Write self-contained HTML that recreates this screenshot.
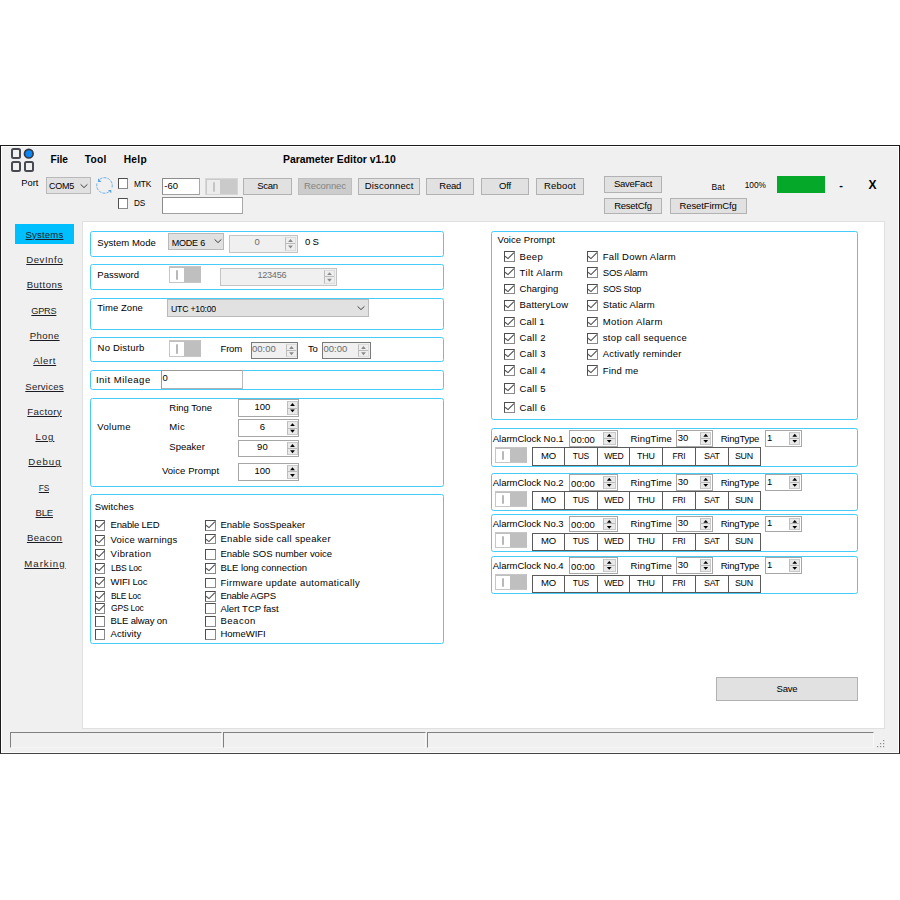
<!DOCTYPE html><html><head><meta charset="utf-8"><style>
html,body{margin:0;padding:0;background:#fff;width:900px;height:900px;overflow:hidden;position:relative}
.t{position:absolute;font-family:"Liberation Sans",sans-serif;white-space:nowrap;line-height:0;height:0}
div,svg{position:absolute}
</style></head><body>
<div style="position:absolute;left:0.0px;top:145.0px;width:900.0px;height:609.0px;box-sizing:border-box;background:#f0f0f0;border:1px solid #1a1a1a;border-bottom-color:#444"></div>
<div style="position:absolute;left:1.0px;top:146.0px;width:898.0px;height:607.0px;box-sizing:border-box;border-top:1px solid #fff;border-left:1px solid #fff;border-right:1px solid #fff;border-bottom:1px solid #fafafa"></div>
<div style="position:absolute;left:11.0px;top:148.3px;width:9.9px;height:10.4px;box-sizing:border-box;border:2px solid #464950;border-radius:2.5px"></div>
<div style="position:absolute;left:11.0px;top:161.3px;width:9.9px;height:10.4px;box-sizing:border-box;border:2px solid #464950;border-radius:2.5px"></div>
<div style="position:absolute;left:23.8px;top:161.3px;width:10.2px;height:10.4px;box-sizing:border-box;border:2px solid #464950;border-radius:2.5px"></div>
<svg style="position:absolute;left:22px;top:147px" width="14" height="14"><circle cx="6.8" cy="6.7" r="4.3" fill="#0a86f7" stroke="#353a44" stroke-width="1.7"/></svg>
<div class="t" style="left:50.4px;top:159.9px;font-size:10.2px;font-weight:700;color:#000;letter-spacing:0.013px;">File</div>
<div class="t" style="left:84.7px;top:159.9px;font-size:10.2px;font-weight:700;color:#000;letter-spacing:0.283px;">Tool</div>
<div class="t" style="left:123.7px;top:159.9px;font-size:10.2px;font-weight:700;color:#000;letter-spacing:0.307px;">Help</div>
<div class="t" style="left:283.0px;top:159.5px;font-size:10.4px;font-weight:700;color:#000;letter-spacing:0.004px;">Parameter Editor v1.10</div>
<div class="t" style="left:21.3px;top:182.9px;font-size:9.3px;font-weight:400;color:#000;letter-spacing:-0.021px;">Port</div>
<div style="position:absolute;left:46.1px;top:177.2px;width:45.2px;height:17.2px;box-sizing:border-box;background:#e1e1e1;border:1px solid #b9b9b9"></div>
<div class="t" style="left:48.9px;top:186.2px;font-size:9px;font-weight:400;color:#000;letter-spacing:-0.250px;">COM5</div>
<svg style="position:absolute;left:79.2px;top:182.8px" width="10" height="6"><path d="M1.6 1.4 L5 4.6 L8.4 1.4" fill="none" stroke="#404040" stroke-width="1"/></svg>
<svg style="position:absolute;left:92px;top:174px" width="24" height="23"><g fill="none" stroke="#72b3ea" stroke-width="1" stroke-dasharray="3 1"><path d="M20.03 13.42 A7.8 7.8 0 0 0 7.6 5.4"/><path d="M4.97 9.38 A7.8 7.8 0 0 0 17.6 17.3"/></g><path d="M6 4.2 L6 7.9 L9.4 7.9 Z" fill="#5aa3e4"/><path d="M16 16 L19.3 16 L19.3 19.3 Z" fill="#5aa3e4"/></svg>
<div style="position:absolute;left:117.6px;top:178.3px;width:10.5px;height:10.5px;box-sizing:border-box;border:1.1px solid;border-color:#4e4e4e #8a8a8a #8a8a8a #4e4e4e;background:#fff"></div>
<div class="t" style="left:133.7px;top:183.9px;font-size:9.3px;font-weight:400;color:#000;letter-spacing:-0.250px;transform-origin:0 0;transform:scaleX(0.9046);">MTK</div>
<div style="position:absolute;left:117.6px;top:198.3px;width:10.5px;height:10.5px;box-sizing:border-box;border:1.1px solid;border-color:#4e4e4e #8a8a8a #8a8a8a #4e4e4e;background:#fff"></div>
<div class="t" style="left:133.7px;top:203.2px;font-size:9.3px;font-weight:400;color:#000;letter-spacing:-0.250px;transform-origin:0 0;transform:scaleX(0.8760);">DS</div>
<div style="position:absolute;left:162.0px;top:177.7px;width:37.7px;height:17.8px;box-sizing:border-box;background:#fff;border:1.2px solid #8c8c8c;border-right-color:#a8a8a8;border-bottom-color:#a0a0a0"></div>
<div class="t" style="left:164.3px;top:185.9px;font-size:9.5px;font-weight:400;color:#000;letter-spacing:0.000px;">-60</div>
<div style="position:absolute;left:162.0px;top:197.3px;width:81.0px;height:17.2px;box-sizing:border-box;background:#fff;border:1.2px solid #8c8c8c;border-right-color:#a8a8a8;border-bottom-color:#a0a0a0"></div>
<div style="position:absolute;left:205.0px;top:178.0px;width:32.7px;height:16.7px;box-sizing:border-box;background:#cacaca;border:1.5px solid #d6d6d6"></div>
<div style="position:absolute;left:206.5px;top:179.5px;width:13.9px;height:14.2px;box-sizing:border-box;background:#ececec"></div>
<div style="position:absolute;left:212.5px;top:181.8px;width:2.0px;height:9.8px;box-sizing:border-box;background:#c4c4c4;border-radius:1px"></div>
<div style="position:absolute;left:243.4px;top:177.8px;width:48.3px;height:17.2px;box-sizing:border-box;background:#e1e1e1;border:1px solid #b2b2b2"></div>
<div class="t" style="left:167.6px;width:200px;text-align:center;top:186.4px;font-size:9.5px;font-weight:400;color:#000;letter-spacing:-0.250px;text-indent:-0.250px;">Scan</div>
<div style="position:absolute;left:298.3px;top:177.8px;width:53.4px;height:17.2px;box-sizing:border-box;background:#cccccc;border:1px solid #bfbfbf"></div>
<div class="t" style="left:225.0px;width:200px;text-align:center;top:186.4px;font-size:9.5px;font-weight:400;color:#838383;letter-spacing:-0.112px;text-indent:-0.112px;">Reconnec</div>
<div style="position:absolute;left:358.3px;top:177.8px;width:61.6px;height:17.2px;box-sizing:border-box;background:#e1e1e1;border:1px solid #b2b2b2"></div>
<div class="t" style="left:289.1px;width:200px;text-align:center;top:186.4px;font-size:9.5px;font-weight:400;color:#000;letter-spacing:0.189px;text-indent:0.189px;">Disconnect</div>
<div style="position:absolute;left:426.2px;top:177.8px;width:48.2px;height:17.2px;box-sizing:border-box;background:#e1e1e1;border:1px solid #b2b2b2"></div>
<div class="t" style="left:350.3px;width:200px;text-align:center;top:186.4px;font-size:9.5px;font-weight:400;color:#000;letter-spacing:-0.173px;text-indent:-0.173px;">Read</div>
<div style="position:absolute;left:481.1px;top:177.8px;width:47.8px;height:17.2px;box-sizing:border-box;background:#e1e1e1;border:1px solid #b2b2b2"></div>
<div class="t" style="left:405.0px;width:200px;text-align:center;top:186.4px;font-size:9.5px;font-weight:400;color:#000;letter-spacing:-0.150px;text-indent:-0.150px;">Off</div>
<div style="position:absolute;left:535.6px;top:177.8px;width:48.4px;height:17.2px;box-sizing:border-box;background:#e1e1e1;border:1px solid #b2b2b2"></div>
<div class="t" style="left:459.8px;width:200px;text-align:center;top:186.4px;font-size:9.5px;font-weight:400;color:#000;letter-spacing:0.232px;text-indent:0.232px;">Reboot</div>
<div style="position:absolute;left:604.2px;top:176.0px;width:57.8px;height:16.6px;box-sizing:border-box;background:#e1e1e1;border:1px solid #b2b2b2"></div>
<div class="t" style="left:533.1px;width:200px;text-align:center;top:184.3px;font-size:9.5px;font-weight:400;color:#000;letter-spacing:-0.250px;text-indent:-0.250px;">SaveFact</div>
<div style="position:absolute;left:604.2px;top:197.9px;width:57.8px;height:16.5px;box-sizing:border-box;background:#e1e1e1;border:1px solid #b2b2b2"></div>
<div class="t" style="left:533.1px;width:200px;text-align:center;top:206.1px;font-size:9.5px;font-weight:400;color:#000;letter-spacing:-0.250px;text-indent:-0.250px;">ResetCfg</div>
<div style="position:absolute;left:670.0px;top:197.9px;width:76.5px;height:16.5px;box-sizing:border-box;background:#e1e1e1;border:1px solid #b2b2b2"></div>
<div class="t" style="left:608.2px;width:200px;text-align:center;top:206.1px;font-size:9.5px;font-weight:400;color:#000;letter-spacing:-0.109px;text-indent:-0.109px;">ResetFirmCfg</div>
<div class="t" style="left:711.4px;top:187.0px;font-size:8.5px;font-weight:400;color:#000;letter-spacing:0.267px;">Bat</div>
<div class="t" style="left:744.7px;top:185.0px;font-size:8.3px;font-weight:400;color:#000;letter-spacing:-0.011px;">100%</div>
<div style="position:absolute;left:776.8px;top:176.0px;width:48.2px;height:17.3px;box-sizing:border-box;background:#06a82a"></div>
<div class="t" style="left:741.0px;width:200px;text-align:center;top:185.1px;font-size:11px;font-weight:700;color:#000;letter-spacing:0.000px;text-indent:0.000px;">-</div>
<div class="t" style="left:772.6px;width:200px;text-align:center;top:184.9px;font-size:12px;font-weight:700;color:#000;letter-spacing:0.000px;text-indent:0.000px;">X</div>
<div style="position:absolute;left:15.3px;top:224.2px;width:58.9px;height:20.2px;box-sizing:border-box;background:#00bfff"></div>
<div class="t" style="left:-55.6px;width:200px;text-align:center;top:234.7px;font-size:9.6px;font-weight:400;color:#1c1c24;letter-spacing:0.159px;text-indent:0.159px;text-decoration:underline;text-decoration-thickness:1px;text-underline-offset:1.2px">Systems</div>
<div class="t" style="left:-55.6px;width:200px;text-align:center;top:260.0px;font-size:9.6px;font-weight:400;color:#1c1c24;letter-spacing:0.529px;text-indent:0.529px;text-decoration:underline;text-decoration-thickness:1px;text-underline-offset:1.2px">DevInfo</div>
<div class="t" style="left:-55.6px;width:200px;text-align:center;top:285.3px;font-size:9.6px;font-weight:400;color:#1c1c24;letter-spacing:0.492px;text-indent:0.492px;text-decoration:underline;text-decoration-thickness:1px;text-underline-offset:1.2px">Buttons</div>
<div class="t" style="left:-55.6px;width:200px;text-align:center;top:310.6px;font-size:9.6px;font-weight:400;color:#1c1c24;letter-spacing:-0.250px;text-indent:-0.250px;transform-origin:50% 0;transform:scaleX(0.9545);text-decoration:underline;text-decoration-thickness:1px;text-underline-offset:1.2px">GPRS</div>
<div class="t" style="left:-55.6px;width:200px;text-align:center;top:335.9px;font-size:9.6px;font-weight:400;color:#1c1c24;letter-spacing:0.438px;text-indent:0.438px;text-decoration:underline;text-decoration-thickness:1px;text-underline-offset:1.2px">Phone</div>
<div class="t" style="left:-55.6px;width:200px;text-align:center;top:361.2px;font-size:9.6px;font-weight:400;color:#1c1c24;letter-spacing:0.629px;text-indent:0.629px;text-decoration:underline;text-decoration-thickness:1px;text-underline-offset:1.2px">Alert</div>
<div class="t" style="left:-55.6px;width:200px;text-align:center;top:386.5px;font-size:9.6px;font-weight:400;color:#1c1c24;letter-spacing:0.208px;text-indent:0.208px;text-decoration:underline;text-decoration-thickness:1px;text-underline-offset:1.2px">Services</div>
<div class="t" style="left:-55.6px;width:200px;text-align:center;top:411.8px;font-size:9.6px;font-weight:400;color:#1c1c24;letter-spacing:0.375px;text-indent:0.375px;text-decoration:underline;text-decoration-thickness:1px;text-underline-offset:1.2px">Factory</div>
<div class="t" style="left:-55.6px;width:200px;text-align:center;top:437.1px;font-size:9.6px;font-weight:400;color:#1c1c24;letter-spacing:0.992px;text-indent:0.992px;text-decoration:underline;text-decoration-thickness:1px;text-underline-offset:1.2px">Log</div>
<div class="t" style="left:-55.6px;width:200px;text-align:center;top:462.4px;font-size:9.6px;font-weight:400;color:#1c1c24;letter-spacing:0.992px;text-indent:0.992px;text-decoration:underline;text-decoration-thickness:1px;text-underline-offset:1.2px">Debug</div>
<div class="t" style="left:-55.6px;width:200px;text-align:center;top:487.7px;font-size:9.6px;font-weight:400;color:#1c1c24;letter-spacing:-0.250px;text-indent:-0.250px;transform-origin:50% 0;transform:scaleX(0.8739);text-decoration:underline;text-decoration-thickness:1px;text-underline-offset:1.2px">FS</div>
<div class="t" style="left:-55.6px;width:200px;text-align:center;top:513.0px;font-size:9.6px;font-weight:400;color:#1c1c24;letter-spacing:-0.250px;text-indent:-0.250px;text-decoration:underline;text-decoration-thickness:1px;text-underline-offset:1.2px">BLE</div>
<div class="t" style="left:-55.6px;width:200px;text-align:center;top:538.3px;font-size:9.6px;font-weight:400;color:#1c1c24;letter-spacing:0.491px;text-indent:0.491px;text-decoration:underline;text-decoration-thickness:1px;text-underline-offset:1.2px">Beacon</div>
<div class="t" style="left:-55.6px;width:200px;text-align:center;top:563.6px;font-size:9.6px;font-weight:400;color:#1c1c24;letter-spacing:1.021px;text-indent:1.021px;text-decoration:underline;text-decoration-thickness:1px;text-underline-offset:1.2px">Marking</div>
<div style="position:absolute;left:82.0px;top:221.0px;width:802.5px;height:508.0px;box-sizing:border-box;background:#fff;border:1px solid #e0e0e0"></div>
<div style="position:absolute;left:90.4px;top:230.7px;width:353.6px;height:26.3px;box-sizing:border-box;border:1.4px solid #45cdfa;border-radius:2.5px"></div>
<div class="t" style="left:97.3px;top:242.5px;font-size:9.5px;font-weight:400;color:#000;letter-spacing:0.042px;">System Mode</div>
<div style="position:absolute;left:168.0px;top:232.7px;width:56.3px;height:17.1px;box-sizing:border-box;background:#e1e1e1;border:1px solid #b9b9b9"></div>
<div class="t" style="left:171.7px;top:242.5px;font-size:9px;font-weight:400;color:#000;letter-spacing:-0.203px;">MODE 6</div>
<svg style="position:absolute;left:212.5px;top:238.2px" width="10" height="6"><path d="M1.6 1.4 L5 4.6 L8.4 1.4" fill="none" stroke="#404040" stroke-width="1"/></svg>
<div style="position:absolute;left:229.4px;top:235.2px;width:68.5px;height:17.5px;box-sizing:border-box;background:#f0f0f0;border:1px solid #c4c4c4"></div>
<div style="position:absolute;left:284.9px;top:237.2px;width:11.0px;height:13.5px;box-sizing:border-box;background:#eeeeee;border:1px solid #dcdcdc;border-left-color:#bdbdbd"></div>
<div style="position:absolute;left:285.9px;top:243.4px;width:9.0px;height:1.0px;box-sizing:border-box;background:#bababa"></div>
<svg style="position:absolute;left:284.9px;top:237.2px" width="11.0" height="13.5"><path d="M3.10 4.97 L7.90 4.97 L5.50 2.08 Z" fill="#8a8a8a"/><path d="M3.10 8.53 L7.90 8.53 L5.50 11.43 Z" fill="#8a8a8a"/></svg>
<div class="t" style="left:157.1px;width:200px;text-align:center;top:241.9px;font-size:9.5px;font-weight:400;color:#6d6d6d;letter-spacing:0.000px;text-indent:0.000px;">0</div>
<div class="t" style="left:305.1px;top:241.9px;font-size:9.5px;font-weight:400;color:#000;letter-spacing:-0.250px;">0 S</div>
<div style="position:absolute;left:90.4px;top:264.4px;width:353.6px;height:25.8px;box-sizing:border-box;border:1.4px solid #45cdfa;border-radius:2.5px"></div>
<div class="t" style="left:97.3px;top:275.2px;font-size:9.5px;font-weight:400;color:#000;letter-spacing:-0.003px;">Password</div>
<div style="position:absolute;left:168.5px;top:265.7px;width:32.0px;height:17.3px;box-sizing:border-box;background:#bfbfbf;border:1.5px solid #c6c6c6;border-right-color:#bfbfbf;border-bottom-width:1px"></div>
<div style="position:absolute;left:170.0px;top:267.5px;width:13.5px;height:14.7px;box-sizing:border-box;background:#fff"></div>
<div style="position:absolute;left:175.9px;top:269.5px;width:2.0px;height:10.4px;box-sizing:border-box;background:#b8b8b8;border-radius:1px"></div>
<div style="position:absolute;left:220.0px;top:267.7px;width:117.0px;height:17.9px;box-sizing:border-box;background:#f0f0f0;border:1px solid #c4c4c4"></div>
<div style="position:absolute;left:324.0px;top:269.7px;width:11.0px;height:13.9px;box-sizing:border-box;background:#eeeeee;border:1px solid #dcdcdc;border-left-color:#bdbdbd"></div>
<div style="position:absolute;left:325.0px;top:276.1px;width:9.0px;height:1.0px;box-sizing:border-box;background:#bababa"></div>
<svg style="position:absolute;left:324.0px;top:269.7px" width="11.0" height="13.9"><path d="M3.10 5.07 L7.90 5.07 L5.50 2.17 Z" fill="#8a8a8a"/><path d="M3.10 8.83 L7.90 8.83 L5.50 11.73 Z" fill="#8a8a8a"/></svg>
<div class="t" style="left:172.0px;width:200px;text-align:center;top:275.4px;font-size:9.5px;font-weight:400;color:#6d6d6d;letter-spacing:-0.250px;text-indent:-0.250px;transform-origin:50% 0;transform:scaleX(0.9589);">123456</div>
<div style="position:absolute;left:90.4px;top:298.2px;width:353.6px;height:31.8px;box-sizing:border-box;border:1.4px solid #45cdfa;border-radius:2.5px"></div>
<div class="t" style="left:97.3px;top:308.2px;font-size:9.5px;font-weight:400;color:#000;letter-spacing:0.055px;">Time Zone</div>
<div style="position:absolute;left:167.0px;top:299.0px;width:201.7px;height:18.0px;box-sizing:border-box;background:#e1e1e1;border:1px solid #b9b9b9"></div>
<div class="t" style="left:170.5px;top:308.9px;font-size:9.5px;font-weight:400;color:#000;letter-spacing:-0.250px;transform-origin:0 0;transform:scaleX(0.9178);">UTC +10:00</div>
<svg style="position:absolute;left:356.3px;top:305.0px" width="10" height="6"><path d="M1.6 1.4 L5 4.6 L8.4 1.4" fill="none" stroke="#404040" stroke-width="1"/></svg>
<div style="position:absolute;left:90.4px;top:337.3px;width:353.6px;height:25.0px;box-sizing:border-box;border:1.4px solid #45cdfa;border-radius:2.5px"></div>
<div class="t" style="left:97.6px;top:348.0px;font-size:9.5px;font-weight:400;color:#000;letter-spacing:0.203px;">No Disturb</div>
<div style="position:absolute;left:168.5px;top:340.3px;width:32.0px;height:16.7px;box-sizing:border-box;background:#bfbfbf;border:1.5px solid #c6c6c6;border-right-color:#bfbfbf;border-bottom-width:1px"></div>
<div style="position:absolute;left:170.0px;top:342.1px;width:13.5px;height:14.1px;box-sizing:border-box;background:#fff"></div>
<div style="position:absolute;left:175.9px;top:344.1px;width:2.0px;height:9.8px;box-sizing:border-box;background:#b8b8b8;border-radius:1px"></div>
<div class="t" style="left:220.6px;top:348.7px;font-size:9.5px;font-weight:400;color:#000;letter-spacing:-0.224px;">From</div>
<div style="position:absolute;left:250.7px;top:341.5px;width:47.8px;height:17.1px;box-sizing:border-box;background:#f0f0f0;border:1px solid #7a7a7a"></div>
<div style="position:absolute;left:285.5px;top:343.5px;width:11.0px;height:13.1px;box-sizing:border-box;background:#eeeeee;border:1px solid #dcdcdc;border-left-color:#bdbdbd"></div>
<div style="position:absolute;left:286.5px;top:349.6px;width:9.0px;height:1.0px;box-sizing:border-box;background:#bababa"></div>
<svg style="position:absolute;left:285.5px;top:343.5px" width="11.0" height="13.1"><path d="M3.10 4.88 L7.90 4.88 L5.50 1.98 Z" fill="#8a8a8a"/><path d="M3.10 8.23 L7.90 8.23 L5.50 11.13 Z" fill="#8a8a8a"/></svg>
<div class="t" style="left:252.0px;top:349.2px;font-size:9.5px;font-weight:400;color:#6d6d6d;letter-spacing:0.000px;">00:00</div>
<div class="t" style="left:308.0px;top:349.2px;font-size:9.5px;font-weight:400;color:#000;letter-spacing:-0.250px;">To</div>
<div style="position:absolute;left:322.2px;top:341.5px;width:48.6px;height:17.1px;box-sizing:border-box;background:#f0f0f0;border:1px solid #7a7a7a"></div>
<div style="position:absolute;left:357.8px;top:343.5px;width:11.0px;height:13.1px;box-sizing:border-box;background:#eeeeee;border:1px solid #dcdcdc;border-left-color:#bdbdbd"></div>
<div style="position:absolute;left:358.8px;top:349.6px;width:9.0px;height:1.0px;box-sizing:border-box;background:#bababa"></div>
<svg style="position:absolute;left:357.8px;top:343.5px" width="11.0" height="13.1"><path d="M3.10 4.88 L7.90 4.88 L5.50 1.98 Z" fill="#8a8a8a"/><path d="M3.10 8.23 L7.90 8.23 L5.50 11.13 Z" fill="#8a8a8a"/></svg>
<div class="t" style="left:323.5px;top:349.2px;font-size:9.5px;font-weight:400;color:#6d6d6d;letter-spacing:0.000px;">00:00</div>
<div style="position:absolute;left:90.4px;top:370.3px;width:353.6px;height:20.1px;box-sizing:border-box;border:1.4px solid #45cdfa;border-radius:2.5px"></div>
<div class="t" style="left:95.9px;top:379.8px;font-size:9.5px;font-weight:400;color:#000;letter-spacing:0.519px;">Init Mileage</div>
<div style="position:absolute;left:161.2px;top:370.3px;width:81.4px;height:18.3px;box-sizing:border-box;background:#fff;border:1px solid #9a9a9a;border-right-color:#b8b8b8;border-bottom-color:#b0b0b0"></div>
<div class="t" style="left:162.6px;top:378.2px;font-size:9.5px;font-weight:400;color:#000;letter-spacing:0.000px;">0</div>
<div style="position:absolute;left:90.4px;top:397.5px;width:353.6px;height:89.5px;box-sizing:border-box;border:1.4px solid #45cdfa;border-radius:2.5px"></div>
<div class="t" style="left:97.3px;top:427.2px;font-size:9.5px;font-weight:400;color:#000;letter-spacing:0.322px;">Volume</div>
<div class="t" style="left:169.3px;top:408.0px;font-size:9.5px;font-weight:400;color:#000;letter-spacing:0.011px;">Ring Tone</div>
<div class="t" style="left:169.3px;top:427.2px;font-size:9.5px;font-weight:400;color:#000;letter-spacing:0.359px;">Mic</div>
<div class="t" style="left:169.3px;top:447.2px;font-size:9.5px;font-weight:400;color:#000;letter-spacing:0.018px;">Speaker</div>
<div class="t" style="left:161.9px;top:471.2px;font-size:9.5px;font-weight:400;color:#000;letter-spacing:0.064px;">Voice Prompt</div>
<div style="position:absolute;left:238.3px;top:399.3px;width:61.2px;height:17.3px;box-sizing:border-box;background:#fff;border:1px solid #a6a6a6"></div>
<div style="position:absolute;left:286.5px;top:401.3px;width:11.0px;height:13.3px;box-sizing:border-box;background:#e9e9e9;border:1px solid #c9c9c9;border-left-color:#bdbdbd"></div>
<div style="position:absolute;left:287.5px;top:407.5px;width:9.0px;height:1.0px;box-sizing:border-box;background:#bababa"></div>
<svg style="position:absolute;left:286.5px;top:401.3px" width="11.0" height="13.3"><path d="M3.10 4.93 L7.90 4.93 L5.50 2.03 Z" fill="#000"/><path d="M3.10 8.38 L7.90 8.38 L5.50 11.28 Z" fill="#000"/></svg>
<div class="t" style="left:162.4px;width:200px;text-align:center;top:407.0px;font-size:9.5px;font-weight:400;color:#000;letter-spacing:0.000px;text-indent:0.000px;">100</div>
<div style="position:absolute;left:238.3px;top:419.3px;width:61.2px;height:17.9px;box-sizing:border-box;background:#fff;border:1px solid #a6a6a6"></div>
<div style="position:absolute;left:286.5px;top:421.3px;width:11.0px;height:13.9px;box-sizing:border-box;background:#e9e9e9;border:1px solid #c9c9c9;border-left-color:#bdbdbd"></div>
<div style="position:absolute;left:287.5px;top:427.8px;width:9.0px;height:1.0px;box-sizing:border-box;background:#bababa"></div>
<svg style="position:absolute;left:286.5px;top:421.3px" width="11.0" height="13.9"><path d="M3.10 5.07 L7.90 5.07 L5.50 2.17 Z" fill="#000"/><path d="M3.10 8.82 L7.90 8.82 L5.50 11.72 Z" fill="#000"/></svg>
<div class="t" style="left:162.4px;width:200px;text-align:center;top:427.2px;font-size:9.5px;font-weight:400;color:#000;letter-spacing:0.000px;text-indent:0.000px;">6</div>
<div style="position:absolute;left:238.3px;top:439.9px;width:61.2px;height:17.3px;box-sizing:border-box;background:#fff;border:1px solid #a6a6a6"></div>
<div style="position:absolute;left:286.5px;top:441.9px;width:11.0px;height:13.3px;box-sizing:border-box;background:#e9e9e9;border:1px solid #c9c9c9;border-left-color:#bdbdbd"></div>
<div style="position:absolute;left:287.5px;top:448.0px;width:9.0px;height:1.0px;box-sizing:border-box;background:#bababa"></div>
<svg style="position:absolute;left:286.5px;top:441.9px" width="11.0" height="13.3"><path d="M3.10 4.92 L7.90 4.92 L5.50 2.02 Z" fill="#000"/><path d="M3.10 8.37 L7.90 8.37 L5.50 11.27 Z" fill="#000"/></svg>
<div class="t" style="left:162.4px;width:200px;text-align:center;top:447.2px;font-size:9.5px;font-weight:400;color:#000;letter-spacing:0.000px;text-indent:0.000px;">90</div>
<div style="position:absolute;left:238.3px;top:462.5px;width:61.2px;height:18.2px;box-sizing:border-box;background:#fff;border:1px solid #a6a6a6"></div>
<div style="position:absolute;left:286.5px;top:464.5px;width:11.0px;height:14.2px;box-sizing:border-box;background:#e9e9e9;border:1px solid #c9c9c9;border-left-color:#bdbdbd"></div>
<div style="position:absolute;left:287.5px;top:471.1px;width:9.0px;height:1.0px;box-sizing:border-box;background:#bababa"></div>
<svg style="position:absolute;left:286.5px;top:464.5px" width="11.0" height="14.2"><path d="M3.10 5.15 L7.90 5.15 L5.50 2.25 Z" fill="#000"/><path d="M3.10 9.05 L7.90 9.05 L5.50 11.95 Z" fill="#000"/></svg>
<div class="t" style="left:162.4px;width:200px;text-align:center;top:471.2px;font-size:9.5px;font-weight:400;color:#000;letter-spacing:0.000px;text-indent:0.000px;">100</div>
<div style="position:absolute;left:90.4px;top:494.0px;width:353.6px;height:149.5px;box-sizing:border-box;border:1.4px solid #45cdfa;border-radius:2.5px"></div>
<div class="t" style="left:94.7px;top:507.2px;font-size:9.5px;font-weight:400;color:#000;letter-spacing:0.155px;">Switches</div>
<div style="position:absolute;left:94.7px;top:520.0px;width:10.5px;height:10.5px;box-sizing:border-box;border:1.1px solid;border-color:#4e4e4e #8a8a8a #8a8a8a #4e4e4e;background:#fff"><svg width="11" height="11" style="position:absolute;left:-1px;top:-1px"><path d="M1 5.2 L4 7.6 L9.9 1.7" fill="none" stroke="#505050" stroke-width="1.1"/></svg></div>
<div class="t" style="left:110.6px;top:524.8px;font-size:9.5px;font-weight:400;color:#000;letter-spacing:-0.200px;">Enable LED</div>
<div style="position:absolute;left:94.7px;top:535.3px;width:10.5px;height:10.5px;box-sizing:border-box;border:1.1px solid;border-color:#4e4e4e #8a8a8a #8a8a8a #4e4e4e;background:#fff"><svg width="11" height="11" style="position:absolute;left:-1px;top:-1px"><path d="M1 5.2 L4 7.6 L9.9 1.7" fill="none" stroke="#505050" stroke-width="1.1"/></svg></div>
<div class="t" style="left:110.6px;top:540.3px;font-size:9.5px;font-weight:400;color:#000;letter-spacing:0.215px;">Voice warnings</div>
<div style="position:absolute;left:94.7px;top:549.4px;width:10.5px;height:10.5px;box-sizing:border-box;border:1.1px solid;border-color:#4e4e4e #8a8a8a #8a8a8a #4e4e4e;background:#fff"><svg width="11" height="11" style="position:absolute;left:-1px;top:-1px"><path d="M1 5.2 L4 7.6 L9.9 1.7" fill="none" stroke="#505050" stroke-width="1.1"/></svg></div>
<div class="t" style="left:110.6px;top:554.1px;font-size:9.5px;font-weight:400;color:#000;letter-spacing:0.384px;">Vibration</div>
<div style="position:absolute;left:94.7px;top:563.3px;width:10.5px;height:10.5px;box-sizing:border-box;border:1.1px solid;border-color:#4e4e4e #8a8a8a #8a8a8a #4e4e4e;background:#fff"><svg width="11" height="11" style="position:absolute;left:-1px;top:-1px"><path d="M1 5.2 L4 7.6 L9.9 1.7" fill="none" stroke="#505050" stroke-width="1.1"/></svg></div>
<div class="t" style="left:110.6px;top:568.1px;font-size:9.5px;font-weight:400;color:#000;letter-spacing:-0.250px;transform-origin:0 0;transform:scaleX(0.9035);">LBS Loc</div>
<div style="position:absolute;left:94.7px;top:577.2px;width:10.5px;height:10.5px;box-sizing:border-box;border:1.1px solid;border-color:#4e4e4e #8a8a8a #8a8a8a #4e4e4e;background:#fff"><svg width="11" height="11" style="position:absolute;left:-1px;top:-1px"><path d="M1 5.2 L4 7.6 L9.9 1.7" fill="none" stroke="#505050" stroke-width="1.1"/></svg></div>
<div class="t" style="left:110.6px;top:582.0px;font-size:9.5px;font-weight:400;color:#000;letter-spacing:-0.159px;">WIFI Loc</div>
<div style="position:absolute;left:94.7px;top:591.1px;width:10.5px;height:10.5px;box-sizing:border-box;border:1.1px solid;border-color:#4e4e4e #8a8a8a #8a8a8a #4e4e4e;background:#fff"><svg width="11" height="11" style="position:absolute;left:-1px;top:-1px"><path d="M1 5.2 L4 7.6 L9.9 1.7" fill="none" stroke="#505050" stroke-width="1.1"/></svg></div>
<div class="t" style="left:110.6px;top:595.9px;font-size:9.5px;font-weight:400;color:#000;letter-spacing:-0.250px;transform-origin:0 0;transform:scaleX(0.8773);">BLE Loc</div>
<div style="position:absolute;left:94.7px;top:603.1px;width:10.5px;height:10.5px;box-sizing:border-box;border:1.1px solid;border-color:#4e4e4e #8a8a8a #8a8a8a #4e4e4e;background:#fff"><svg width="11" height="11" style="position:absolute;left:-1px;top:-1px"><path d="M1 5.2 L4 7.6 L9.9 1.7" fill="none" stroke="#505050" stroke-width="1.1"/></svg></div>
<div class="t" style="left:110.6px;top:608.1px;font-size:9.5px;font-weight:400;color:#000;letter-spacing:-0.250px;transform-origin:0 0;transform:scaleX(0.9006);">GPS Loc</div>
<div style="position:absolute;left:94.7px;top:616.1px;width:10.5px;height:10.5px;box-sizing:border-box;border:1.1px solid;border-color:#4e4e4e #8a8a8a #8a8a8a #4e4e4e;background:#fff"></div>
<div class="t" style="left:110.6px;top:621.1px;font-size:9.5px;font-weight:400;color:#000;letter-spacing:-0.127px;">BLE alway on</div>
<div style="position:absolute;left:94.7px;top:629.1px;width:10.5px;height:10.5px;box-sizing:border-box;border:1.1px solid;border-color:#4e4e4e #8a8a8a #8a8a8a #4e4e4e;background:#fff"></div>
<div class="t" style="left:110.6px;top:634.4px;font-size:9.5px;font-weight:400;color:#000;letter-spacing:0.087px;">Activity</div>
<div style="position:absolute;left:205.0px;top:520.2px;width:10.5px;height:10.5px;box-sizing:border-box;border:1.1px solid;border-color:#4e4e4e #8a8a8a #8a8a8a #4e4e4e;background:#fff"><svg width="11" height="11" style="position:absolute;left:-1px;top:-1px"><path d="M1 5.2 L4 7.6 L9.9 1.7" fill="none" stroke="#505050" stroke-width="1.1"/></svg></div>
<div class="t" style="left:220.4px;top:525.0px;font-size:9.5px;font-weight:400;color:#000;letter-spacing:0.057px;">Enable SosSpeaker</div>
<div style="position:absolute;left:205.0px;top:533.9px;width:10.5px;height:10.5px;box-sizing:border-box;border:1.1px solid;border-color:#4e4e4e #8a8a8a #8a8a8a #4e4e4e;background:#fff"><svg width="11" height="11" style="position:absolute;left:-1px;top:-1px"><path d="M1 5.2 L4 7.6 L9.9 1.7" fill="none" stroke="#505050" stroke-width="1.1"/></svg></div>
<div class="t" style="left:220.4px;top:538.9px;font-size:9.5px;font-weight:400;color:#000;letter-spacing:0.314px;">Enable side call speaker</div>
<div style="position:absolute;left:205.0px;top:549.4px;width:10.5px;height:10.5px;box-sizing:border-box;border:1.1px solid;border-color:#4e4e4e #8a8a8a #8a8a8a #4e4e4e;background:#fff"></div>
<div class="t" style="left:220.4px;top:553.9px;font-size:9.5px;font-weight:400;color:#000;letter-spacing:-0.016px;">Enable SOS number voice</div>
<div style="position:absolute;left:205.0px;top:563.3px;width:10.5px;height:10.5px;box-sizing:border-box;border:1.1px solid;border-color:#4e4e4e #8a8a8a #8a8a8a #4e4e4e;background:#fff"><svg width="11" height="11" style="position:absolute;left:-1px;top:-1px"><path d="M1 5.2 L4 7.6 L9.9 1.7" fill="none" stroke="#505050" stroke-width="1.1"/></svg></div>
<div class="t" style="left:220.4px;top:568.1px;font-size:9.5px;font-weight:400;color:#000;letter-spacing:-0.025px;">BLE long connection</div>
<div style="position:absolute;left:205.0px;top:577.5px;width:10.5px;height:10.5px;box-sizing:border-box;border:1.1px solid;border-color:#4e4e4e #8a8a8a #8a8a8a #4e4e4e;background:#fff"></div>
<div class="t" style="left:220.4px;top:582.5px;font-size:9.5px;font-weight:400;color:#000;letter-spacing:0.355px;">Firmware update automatically</div>
<div style="position:absolute;left:205.0px;top:591.4px;width:10.5px;height:10.5px;box-sizing:border-box;border:1.1px solid;border-color:#4e4e4e #8a8a8a #8a8a8a #4e4e4e;background:#fff"><svg width="11" height="11" style="position:absolute;left:-1px;top:-1px"><path d="M1 5.2 L4 7.6 L9.9 1.7" fill="none" stroke="#505050" stroke-width="1.1"/></svg></div>
<div class="t" style="left:220.4px;top:596.1px;font-size:9.5px;font-weight:400;color:#000;letter-spacing:-0.250px;">Enable AGPS</div>
<div style="position:absolute;left:205.0px;top:603.3px;width:10.5px;height:10.5px;box-sizing:border-box;border:1.1px solid;border-color:#4e4e4e #8a8a8a #8a8a8a #4e4e4e;background:#fff"></div>
<div class="t" style="left:220.4px;top:608.6px;font-size:9.5px;font-weight:400;color:#000;letter-spacing:-0.045px;">Alert TCP fast</div>
<div style="position:absolute;left:205.0px;top:616.4px;width:10.5px;height:10.5px;box-sizing:border-box;border:1.1px solid;border-color:#4e4e4e #8a8a8a #8a8a8a #4e4e4e;background:#fff"></div>
<div class="t" style="left:220.4px;top:621.4px;font-size:9.5px;font-weight:400;color:#000;letter-spacing:0.553px;">Beacon</div>
<div style="position:absolute;left:205.0px;top:629.4px;width:10.5px;height:10.5px;box-sizing:border-box;border:1.1px solid;border-color:#4e4e4e #8a8a8a #8a8a8a #4e4e4e;background:#fff"></div>
<div class="t" style="left:220.4px;top:634.4px;font-size:9.5px;font-weight:400;color:#000;letter-spacing:-0.013px;">HomeWIFI</div>
<div style="position:absolute;left:491.4px;top:231.1px;width:366.8px;height:188.5px;box-sizing:border-box;border:1.4px solid #45cdfa;border-radius:2.5px"></div>
<div class="t" style="left:497.6px;top:240.0px;font-size:9.5px;font-weight:400;color:#000;letter-spacing:0.064px;">Voice Prompt</div>
<div style="position:absolute;left:504.0px;top:251.1px;width:10.5px;height:10.5px;box-sizing:border-box;border:1.1px solid;border-color:#4e4e4e #8a8a8a #8a8a8a #4e4e4e;background:#fff"><svg width="11" height="11" style="position:absolute;left:-1px;top:-1px"><path d="M1 5.2 L4 7.6 L9.9 1.7" fill="none" stroke="#505050" stroke-width="1.1"/></svg></div>
<div class="t" style="left:519.6px;top:256.6px;font-size:9.5px;font-weight:400;color:#000;letter-spacing:0.304px;">Beep</div>
<div style="position:absolute;left:504.0px;top:267.2px;width:10.5px;height:10.5px;box-sizing:border-box;border:1.1px solid;border-color:#4e4e4e #8a8a8a #8a8a8a #4e4e4e;background:#fff"><svg width="11" height="11" style="position:absolute;left:-1px;top:-1px"><path d="M1 5.2 L4 7.6 L9.9 1.7" fill="none" stroke="#505050" stroke-width="1.1"/></svg></div>
<div class="t" style="left:519.6px;top:272.8px;font-size:9.5px;font-weight:400;color:#000;letter-spacing:0.430px;">Tilt Alarm</div>
<div style="position:absolute;left:504.0px;top:283.9px;width:10.5px;height:10.5px;box-sizing:border-box;border:1.1px solid;border-color:#4e4e4e #8a8a8a #8a8a8a #4e4e4e;background:#fff"><svg width="11" height="11" style="position:absolute;left:-1px;top:-1px"><path d="M1 5.2 L4 7.6 L9.9 1.7" fill="none" stroke="#505050" stroke-width="1.1"/></svg></div>
<div class="t" style="left:519.6px;top:288.9px;font-size:9.5px;font-weight:400;color:#000;letter-spacing:0.020px;">Charging</div>
<div style="position:absolute;left:504.0px;top:300.0px;width:10.5px;height:10.5px;box-sizing:border-box;border:1.1px solid;border-color:#4e4e4e #8a8a8a #8a8a8a #4e4e4e;background:#fff"><svg width="11" height="11" style="position:absolute;left:-1px;top:-1px"><path d="M1 5.2 L4 7.6 L9.9 1.7" fill="none" stroke="#505050" stroke-width="1.1"/></svg></div>
<div class="t" style="left:519.6px;top:305.0px;font-size:9.5px;font-weight:400;color:#000;letter-spacing:0.108px;">BatteryLow</div>
<div style="position:absolute;left:504.0px;top:316.7px;width:10.5px;height:10.5px;box-sizing:border-box;border:1.1px solid;border-color:#4e4e4e #8a8a8a #8a8a8a #4e4e4e;background:#fff"><svg width="11" height="11" style="position:absolute;left:-1px;top:-1px"><path d="M1 5.2 L4 7.6 L9.9 1.7" fill="none" stroke="#505050" stroke-width="1.1"/></svg></div>
<div class="t" style="left:519.6px;top:321.6px;font-size:9.5px;font-weight:400;color:#000;letter-spacing:0.121px;">Call 1</div>
<div style="position:absolute;left:504.0px;top:333.0px;width:10.5px;height:10.5px;box-sizing:border-box;border:1.1px solid;border-color:#4e4e4e #8a8a8a #8a8a8a #4e4e4e;background:#fff"><svg width="11" height="11" style="position:absolute;left:-1px;top:-1px"><path d="M1 5.2 L4 7.6 L9.9 1.7" fill="none" stroke="#505050" stroke-width="1.1"/></svg></div>
<div class="t" style="left:519.6px;top:338.1px;font-size:9.5px;font-weight:400;color:#000;letter-spacing:0.318px;">Call 2</div>
<div style="position:absolute;left:504.0px;top:349.2px;width:10.5px;height:10.5px;box-sizing:border-box;border:1.1px solid;border-color:#4e4e4e #8a8a8a #8a8a8a #4e4e4e;background:#fff"><svg width="11" height="11" style="position:absolute;left:-1px;top:-1px"><path d="M1 5.2 L4 7.6 L9.9 1.7" fill="none" stroke="#505050" stroke-width="1.1"/></svg></div>
<div class="t" style="left:519.6px;top:354.4px;font-size:9.5px;font-weight:400;color:#000;letter-spacing:0.318px;">Call 3</div>
<div style="position:absolute;left:504.0px;top:365.2px;width:10.5px;height:10.5px;box-sizing:border-box;border:1.1px solid;border-color:#4e4e4e #8a8a8a #8a8a8a #4e4e4e;background:#fff"><svg width="11" height="11" style="position:absolute;left:-1px;top:-1px"><path d="M1 5.2 L4 7.6 L9.9 1.7" fill="none" stroke="#505050" stroke-width="1.1"/></svg></div>
<div class="t" style="left:519.6px;top:370.8px;font-size:9.5px;font-weight:400;color:#000;letter-spacing:0.318px;">Call 4</div>
<div style="position:absolute;left:504.0px;top:383.3px;width:10.5px;height:10.5px;box-sizing:border-box;border:1.1px solid;border-color:#4e4e4e #8a8a8a #8a8a8a #4e4e4e;background:#fff"><svg width="11" height="11" style="position:absolute;left:-1px;top:-1px"><path d="M1 5.2 L4 7.6 L9.9 1.7" fill="none" stroke="#505050" stroke-width="1.1"/></svg></div>
<div class="t" style="left:519.6px;top:388.9px;font-size:9.5px;font-weight:400;color:#000;letter-spacing:0.318px;">Call 5</div>
<div style="position:absolute;left:504.0px;top:402.2px;width:10.5px;height:10.5px;box-sizing:border-box;border:1.1px solid;border-color:#4e4e4e #8a8a8a #8a8a8a #4e4e4e;background:#fff"><svg width="11" height="11" style="position:absolute;left:-1px;top:-1px"><path d="M1 5.2 L4 7.6 L9.9 1.7" fill="none" stroke="#505050" stroke-width="1.1"/></svg></div>
<div class="t" style="left:519.6px;top:407.8px;font-size:9.5px;font-weight:400;color:#000;letter-spacing:0.318px;">Call 6</div>
<div style="position:absolute;left:587.2px;top:251.1px;width:10.5px;height:10.5px;box-sizing:border-box;border:1.1px solid;border-color:#4e4e4e #8a8a8a #8a8a8a #4e4e4e;background:#fff"><svg width="11" height="11" style="position:absolute;left:-1px;top:-1px"><path d="M1 5.2 L4 7.6 L9.9 1.7" fill="none" stroke="#505050" stroke-width="1.1"/></svg></div>
<div class="t" style="left:602.8px;top:256.6px;font-size:9.5px;font-weight:400;color:#000;letter-spacing:0.266px;">Fall Down Alarm</div>
<div style="position:absolute;left:587.2px;top:267.2px;width:10.5px;height:10.5px;box-sizing:border-box;border:1.1px solid;border-color:#4e4e4e #8a8a8a #8a8a8a #4e4e4e;background:#fff"><svg width="11" height="11" style="position:absolute;left:-1px;top:-1px"><path d="M1 5.2 L4 7.6 L9.9 1.7" fill="none" stroke="#505050" stroke-width="1.1"/></svg></div>
<div class="t" style="left:602.8px;top:272.8px;font-size:9.5px;font-weight:400;color:#000;letter-spacing:-0.250px;">SOS Alarm</div>
<div style="position:absolute;left:587.2px;top:283.9px;width:10.5px;height:10.5px;box-sizing:border-box;border:1.1px solid;border-color:#4e4e4e #8a8a8a #8a8a8a #4e4e4e;background:#fff"><svg width="11" height="11" style="position:absolute;left:-1px;top:-1px"><path d="M1 5.2 L4 7.6 L9.9 1.7" fill="none" stroke="#505050" stroke-width="1.1"/></svg></div>
<div class="t" style="left:602.8px;top:288.9px;font-size:9.5px;font-weight:400;color:#000;letter-spacing:-0.250px;transform-origin:0 0;transform:scaleX(0.9432);">SOS Stop</div>
<div style="position:absolute;left:587.2px;top:300.0px;width:10.5px;height:10.5px;box-sizing:border-box;border:1.1px solid;border-color:#4e4e4e #8a8a8a #8a8a8a #4e4e4e;background:#fff"><svg width="11" height="11" style="position:absolute;left:-1px;top:-1px"><path d="M1 5.2 L4 7.6 L9.9 1.7" fill="none" stroke="#505050" stroke-width="1.1"/></svg></div>
<div class="t" style="left:602.8px;top:305.0px;font-size:9.5px;font-weight:400;color:#000;letter-spacing:0.119px;">Static Alarm</div>
<div style="position:absolute;left:587.2px;top:316.7px;width:10.5px;height:10.5px;box-sizing:border-box;border:1.1px solid;border-color:#4e4e4e #8a8a8a #8a8a8a #4e4e4e;background:#fff"><svg width="11" height="11" style="position:absolute;left:-1px;top:-1px"><path d="M1 5.2 L4 7.6 L9.9 1.7" fill="none" stroke="#505050" stroke-width="1.1"/></svg></div>
<div class="t" style="left:602.8px;top:321.6px;font-size:9.5px;font-weight:400;color:#000;letter-spacing:0.369px;">Motion Alarm</div>
<div style="position:absolute;left:587.2px;top:333.0px;width:10.5px;height:10.5px;box-sizing:border-box;border:1.1px solid;border-color:#4e4e4e #8a8a8a #8a8a8a #4e4e4e;background:#fff"><svg width="11" height="11" style="position:absolute;left:-1px;top:-1px"><path d="M1 5.2 L4 7.6 L9.9 1.7" fill="none" stroke="#505050" stroke-width="1.1"/></svg></div>
<div class="t" style="left:602.8px;top:338.1px;font-size:9.5px;font-weight:400;color:#000;letter-spacing:0.312px;">stop call sequence</div>
<div style="position:absolute;left:587.2px;top:349.2px;width:10.5px;height:10.5px;box-sizing:border-box;border:1.1px solid;border-color:#4e4e4e #8a8a8a #8a8a8a #4e4e4e;background:#fff"><svg width="11" height="11" style="position:absolute;left:-1px;top:-1px"><path d="M1 5.2 L4 7.6 L9.9 1.7" fill="none" stroke="#505050" stroke-width="1.1"/></svg></div>
<div class="t" style="left:602.8px;top:354.4px;font-size:9.5px;font-weight:400;color:#000;letter-spacing:0.182px;">Activatly reminder</div>
<div style="position:absolute;left:587.2px;top:365.2px;width:10.5px;height:10.5px;box-sizing:border-box;border:1.1px solid;border-color:#4e4e4e #8a8a8a #8a8a8a #4e4e4e;background:#fff"><svg width="11" height="11" style="position:absolute;left:-1px;top:-1px"><path d="M1 5.2 L4 7.6 L9.9 1.7" fill="none" stroke="#505050" stroke-width="1.1"/></svg></div>
<div class="t" style="left:602.8px;top:370.8px;font-size:9.5px;font-weight:400;color:#000;letter-spacing:0.195px;">Find me</div>
<div style="position:absolute;left:491.4px;top:428.4px;width:366.8px;height:38.4px;box-sizing:border-box;border:1.4px solid #45cdfa;border-radius:2.5px"></div>
<div class="t" style="left:492.8px;top:438.9px;font-size:9.5px;font-weight:400;color:#000;letter-spacing:-0.034px;">AlarmClock No.1</div>
<div style="position:absolute;left:569.2px;top:430.2px;width:48.6px;height:16.7px;box-sizing:border-box;background:#fff;border:1px solid #a6a6a6"></div>
<div style="position:absolute;left:603.3px;top:432.2px;width:12.5px;height:12.7px;box-sizing:border-box;background:#e9e9e9;border:1px solid #c9c9c9;border-left-color:#bdbdbd"></div>
<div style="position:absolute;left:604.3px;top:438.0px;width:10.5px;height:1.0px;box-sizing:border-box;background:#bababa"></div>
<svg style="position:absolute;left:603.3px;top:432.2px" width="12.5" height="12.7"><path d="M3.85 4.77 L8.65 4.77 L6.25 1.87 Z" fill="#000"/><path d="M3.85 7.92 L8.65 7.92 L6.25 10.82 Z" fill="#000"/></svg>
<div class="t" style="left:571.1px;top:440.0px;font-size:9.5px;font-weight:400;color:#000;letter-spacing:0.000px;">00:00</div>
<div class="t" style="left:630.6px;top:438.9px;font-size:9.5px;font-weight:400;color:#000;letter-spacing:0.115px;">RingTime</div>
<div style="position:absolute;left:676.2px;top:430.2px;width:36.5px;height:16.7px;box-sizing:border-box;background:#fff;border:1px solid #a6a6a6"></div>
<div style="position:absolute;left:699.5px;top:432.2px;width:11.5px;height:12.7px;box-sizing:border-box;background:#e9e9e9;border:1px solid #c9c9c9;border-left-color:#bdbdbd"></div>
<div style="position:absolute;left:700.5px;top:438.0px;width:9.5px;height:1.0px;box-sizing:border-box;background:#bababa"></div>
<svg style="position:absolute;left:699.5px;top:432.2px" width="11.5" height="12.7"><path d="M3.35 4.77 L8.15 4.77 L5.75 1.87 Z" fill="#000"/><path d="M3.35 7.92 L8.15 7.92 L5.75 10.82 Z" fill="#000"/></svg>
<div class="t" style="left:677.8px;top:437.8px;font-size:9.5px;font-weight:400;color:#000;letter-spacing:0.000px;">30</div>
<div class="t" style="left:720.7px;top:438.9px;font-size:9.5px;font-weight:400;color:#000;letter-spacing:-0.206px;">RingType</div>
<div style="position:absolute;left:765.0px;top:430.2px;width:36.6px;height:16.7px;box-sizing:border-box;background:#fff;border:1px solid #a6a6a6"></div>
<div style="position:absolute;left:788.5px;top:432.2px;width:11.5px;height:12.7px;box-sizing:border-box;background:#e9e9e9;border:1px solid #c9c9c9;border-left-color:#bdbdbd"></div>
<div style="position:absolute;left:789.5px;top:438.0px;width:9.5px;height:1.0px;box-sizing:border-box;background:#bababa"></div>
<svg style="position:absolute;left:788.5px;top:432.2px" width="11.5" height="12.7"><path d="M3.35 4.77 L8.15 4.77 L5.75 1.87 Z" fill="#000"/><path d="M3.35 7.92 L8.15 7.92 L5.75 10.82 Z" fill="#000"/></svg>
<div class="t" style="left:767.0px;top:437.8px;font-size:9.5px;font-weight:400;color:#000;letter-spacing:0.000px;">1</div>
<div style="position:absolute;left:494.6px;top:446.7px;width:32.1px;height:16.3px;box-sizing:border-box;background:#bfbfbf;border:1.5px solid #c6c6c6;border-right-color:#bfbfbf;border-bottom-width:1px"></div>
<div style="position:absolute;left:496.1px;top:448.5px;width:13.6px;height:13.7px;box-sizing:border-box;background:#fff"></div>
<div style="position:absolute;left:502.0px;top:450.5px;width:2.0px;height:9.4px;box-sizing:border-box;background:#b8b8b8;border-radius:1px"></div>
<div style="position:absolute;left:531.7px;top:447.3px;width:33.5px;height:18.3px;box-sizing:border-box;background:#fff;border:1px solid #5a5a5a"></div>
<div class="t" style="left:448.5px;width:200px;text-align:center;top:455.9px;font-size:9.5px;font-weight:400;color:#000;letter-spacing:-0.213px;text-indent:-0.213px;">MO</div>
<div style="position:absolute;left:564.2px;top:447.3px;width:33.7px;height:18.3px;box-sizing:border-box;background:#fff;border:1px solid #5a5a5a"></div>
<div class="t" style="left:481.0px;width:200px;text-align:center;top:455.9px;font-size:9.5px;font-weight:400;color:#000;letter-spacing:-0.250px;text-indent:-0.250px;transform-origin:50% 0;transform:scaleX(0.8865);">TUS</div>
<div style="position:absolute;left:596.9px;top:447.3px;width:33.5px;height:18.3px;box-sizing:border-box;background:#fff;border:1px solid #5a5a5a"></div>
<div class="t" style="left:513.6px;width:200px;text-align:center;top:455.9px;font-size:9.5px;font-weight:400;color:#000;letter-spacing:-0.250px;text-indent:-0.250px;transform-origin:50% 0;transform:scaleX(0.9044);">WED</div>
<div style="position:absolute;left:629.4px;top:447.3px;width:33.8px;height:18.3px;box-sizing:border-box;background:#fff;border:1px solid #5a5a5a"></div>
<div class="t" style="left:546.3px;width:200px;text-align:center;top:455.9px;font-size:9.5px;font-weight:400;color:#000;letter-spacing:-0.250px;text-indent:-0.250px;transform-origin:50% 0;transform:scaleX(0.9353);">THU</div>
<div style="position:absolute;left:662.2px;top:447.3px;width:33.9px;height:18.3px;box-sizing:border-box;background:#fff;border:1px solid #5a5a5a"></div>
<div class="t" style="left:579.2px;width:200px;text-align:center;top:455.9px;font-size:9.5px;font-weight:400;color:#000;letter-spacing:-0.250px;text-indent:-0.250px;transform-origin:50% 0;transform:scaleX(0.8709);">FRI</div>
<div style="position:absolute;left:695.1px;top:447.3px;width:33.7px;height:18.3px;box-sizing:border-box;background:#fff;border:1px solid #5a5a5a"></div>
<div class="t" style="left:612.0px;width:200px;text-align:center;top:455.9px;font-size:9.5px;font-weight:400;color:#000;letter-spacing:-0.250px;text-indent:-0.250px;transform-origin:50% 0;transform:scaleX(0.9259);">SAT</div>
<div style="position:absolute;left:727.8px;top:447.3px;width:33.2px;height:18.3px;box-sizing:border-box;background:#fff;border:1px solid #5a5a5a"></div>
<div class="t" style="left:644.4px;width:200px;text-align:center;top:455.9px;font-size:9.5px;font-weight:400;color:#000;letter-spacing:-0.250px;text-indent:-0.250px;transform-origin:50% 0;transform:scaleX(0.9304);">SUN</div>
<div style="position:absolute;left:491.4px;top:472.5px;width:366.8px;height:38.4px;box-sizing:border-box;border:1.4px solid #45cdfa;border-radius:2.5px"></div>
<div class="t" style="left:492.8px;top:483.0px;font-size:9.5px;font-weight:400;color:#000;letter-spacing:-0.034px;">AlarmClock No.2</div>
<div style="position:absolute;left:569.2px;top:474.3px;width:48.6px;height:16.7px;box-sizing:border-box;background:#fff;border:1px solid #a6a6a6"></div>
<div style="position:absolute;left:603.3px;top:476.3px;width:12.5px;height:12.7px;box-sizing:border-box;background:#e9e9e9;border:1px solid #c9c9c9;border-left-color:#bdbdbd"></div>
<div style="position:absolute;left:604.3px;top:482.1px;width:10.5px;height:1.0px;box-sizing:border-box;background:#bababa"></div>
<svg style="position:absolute;left:603.3px;top:476.3px" width="12.5" height="12.7"><path d="M3.85 4.77 L8.65 4.77 L6.25 1.87 Z" fill="#000"/><path d="M3.85 7.92 L8.65 7.92 L6.25 10.82 Z" fill="#000"/></svg>
<div class="t" style="left:571.1px;top:484.1px;font-size:9.5px;font-weight:400;color:#000;letter-spacing:0.000px;">00:00</div>
<div class="t" style="left:630.6px;top:483.0px;font-size:9.5px;font-weight:400;color:#000;letter-spacing:0.115px;">RingTime</div>
<div style="position:absolute;left:676.2px;top:474.3px;width:36.5px;height:16.7px;box-sizing:border-box;background:#fff;border:1px solid #a6a6a6"></div>
<div style="position:absolute;left:699.5px;top:476.3px;width:11.5px;height:12.7px;box-sizing:border-box;background:#e9e9e9;border:1px solid #c9c9c9;border-left-color:#bdbdbd"></div>
<div style="position:absolute;left:700.5px;top:482.1px;width:9.5px;height:1.0px;box-sizing:border-box;background:#bababa"></div>
<svg style="position:absolute;left:699.5px;top:476.3px" width="11.5" height="12.7"><path d="M3.35 4.77 L8.15 4.77 L5.75 1.87 Z" fill="#000"/><path d="M3.35 7.92 L8.15 7.92 L5.75 10.82 Z" fill="#000"/></svg>
<div class="t" style="left:677.8px;top:481.9px;font-size:9.5px;font-weight:400;color:#000;letter-spacing:0.000px;">30</div>
<div class="t" style="left:720.7px;top:483.0px;font-size:9.5px;font-weight:400;color:#000;letter-spacing:-0.206px;">RingType</div>
<div style="position:absolute;left:765.0px;top:474.3px;width:36.6px;height:16.7px;box-sizing:border-box;background:#fff;border:1px solid #a6a6a6"></div>
<div style="position:absolute;left:788.5px;top:476.3px;width:11.5px;height:12.7px;box-sizing:border-box;background:#e9e9e9;border:1px solid #c9c9c9;border-left-color:#bdbdbd"></div>
<div style="position:absolute;left:789.5px;top:482.1px;width:9.5px;height:1.0px;box-sizing:border-box;background:#bababa"></div>
<svg style="position:absolute;left:788.5px;top:476.3px" width="11.5" height="12.7"><path d="M3.35 4.77 L8.15 4.77 L5.75 1.87 Z" fill="#000"/><path d="M3.35 7.92 L8.15 7.92 L5.75 10.82 Z" fill="#000"/></svg>
<div class="t" style="left:767.0px;top:481.9px;font-size:9.5px;font-weight:400;color:#000;letter-spacing:0.000px;">1</div>
<div style="position:absolute;left:494.6px;top:490.8px;width:32.1px;height:16.3px;box-sizing:border-box;background:#bfbfbf;border:1.5px solid #c6c6c6;border-right-color:#bfbfbf;border-bottom-width:1px"></div>
<div style="position:absolute;left:496.1px;top:492.6px;width:13.6px;height:13.7px;box-sizing:border-box;background:#fff"></div>
<div style="position:absolute;left:502.0px;top:494.6px;width:2.0px;height:9.4px;box-sizing:border-box;background:#b8b8b8;border-radius:1px"></div>
<div style="position:absolute;left:531.7px;top:491.4px;width:33.5px;height:18.3px;box-sizing:border-box;background:#fff;border:1px solid #5a5a5a"></div>
<div class="t" style="left:448.5px;width:200px;text-align:center;top:500.0px;font-size:9.5px;font-weight:400;color:#000;letter-spacing:-0.213px;text-indent:-0.213px;">MO</div>
<div style="position:absolute;left:564.2px;top:491.4px;width:33.7px;height:18.3px;box-sizing:border-box;background:#fff;border:1px solid #5a5a5a"></div>
<div class="t" style="left:481.0px;width:200px;text-align:center;top:500.0px;font-size:9.5px;font-weight:400;color:#000;letter-spacing:-0.250px;text-indent:-0.250px;transform-origin:50% 0;transform:scaleX(0.8865);">TUS</div>
<div style="position:absolute;left:596.9px;top:491.4px;width:33.5px;height:18.3px;box-sizing:border-box;background:#fff;border:1px solid #5a5a5a"></div>
<div class="t" style="left:513.6px;width:200px;text-align:center;top:500.0px;font-size:9.5px;font-weight:400;color:#000;letter-spacing:-0.250px;text-indent:-0.250px;transform-origin:50% 0;transform:scaleX(0.9044);">WED</div>
<div style="position:absolute;left:629.4px;top:491.4px;width:33.8px;height:18.3px;box-sizing:border-box;background:#fff;border:1px solid #5a5a5a"></div>
<div class="t" style="left:546.3px;width:200px;text-align:center;top:500.0px;font-size:9.5px;font-weight:400;color:#000;letter-spacing:-0.250px;text-indent:-0.250px;transform-origin:50% 0;transform:scaleX(0.9353);">THU</div>
<div style="position:absolute;left:662.2px;top:491.4px;width:33.9px;height:18.3px;box-sizing:border-box;background:#fff;border:1px solid #5a5a5a"></div>
<div class="t" style="left:579.2px;width:200px;text-align:center;top:500.0px;font-size:9.5px;font-weight:400;color:#000;letter-spacing:-0.250px;text-indent:-0.250px;transform-origin:50% 0;transform:scaleX(0.8709);">FRI</div>
<div style="position:absolute;left:695.1px;top:491.4px;width:33.7px;height:18.3px;box-sizing:border-box;background:#fff;border:1px solid #5a5a5a"></div>
<div class="t" style="left:612.0px;width:200px;text-align:center;top:500.0px;font-size:9.5px;font-weight:400;color:#000;letter-spacing:-0.250px;text-indent:-0.250px;transform-origin:50% 0;transform:scaleX(0.9259);">SAT</div>
<div style="position:absolute;left:727.8px;top:491.4px;width:33.2px;height:18.3px;box-sizing:border-box;background:#fff;border:1px solid #5a5a5a"></div>
<div class="t" style="left:644.4px;width:200px;text-align:center;top:500.0px;font-size:9.5px;font-weight:400;color:#000;letter-spacing:-0.250px;text-indent:-0.250px;transform-origin:50% 0;transform:scaleX(0.9304);">SUN</div>
<div style="position:absolute;left:491.4px;top:513.7px;width:366.8px;height:38.4px;box-sizing:border-box;border:1.4px solid #45cdfa;border-radius:2.5px"></div>
<div class="t" style="left:492.8px;top:524.2px;font-size:9.5px;font-weight:400;color:#000;letter-spacing:-0.034px;">AlarmClock No.3</div>
<div style="position:absolute;left:569.2px;top:515.5px;width:48.6px;height:16.7px;box-sizing:border-box;background:#fff;border:1px solid #a6a6a6"></div>
<div style="position:absolute;left:603.3px;top:517.5px;width:12.5px;height:12.7px;box-sizing:border-box;background:#e9e9e9;border:1px solid #c9c9c9;border-left-color:#bdbdbd"></div>
<div style="position:absolute;left:604.3px;top:523.4px;width:10.5px;height:1.0px;box-sizing:border-box;background:#bababa"></div>
<svg style="position:absolute;left:603.3px;top:517.5px" width="12.5" height="12.7"><path d="M3.85 4.78 L8.65 4.78 L6.25 1.88 Z" fill="#000"/><path d="M3.85 7.93 L8.65 7.93 L6.25 10.83 Z" fill="#000"/></svg>
<div class="t" style="left:571.1px;top:525.3px;font-size:9.5px;font-weight:400;color:#000;letter-spacing:0.000px;">00:00</div>
<div class="t" style="left:630.6px;top:524.2px;font-size:9.5px;font-weight:400;color:#000;letter-spacing:0.115px;">RingTime</div>
<div style="position:absolute;left:676.2px;top:515.5px;width:36.5px;height:16.7px;box-sizing:border-box;background:#fff;border:1px solid #a6a6a6"></div>
<div style="position:absolute;left:699.5px;top:517.5px;width:11.5px;height:12.7px;box-sizing:border-box;background:#e9e9e9;border:1px solid #c9c9c9;border-left-color:#bdbdbd"></div>
<div style="position:absolute;left:700.5px;top:523.4px;width:9.5px;height:1.0px;box-sizing:border-box;background:#bababa"></div>
<svg style="position:absolute;left:699.5px;top:517.5px" width="11.5" height="12.7"><path d="M3.35 4.78 L8.15 4.78 L5.75 1.88 Z" fill="#000"/><path d="M3.35 7.93 L8.15 7.93 L5.75 10.83 Z" fill="#000"/></svg>
<div class="t" style="left:677.8px;top:523.1px;font-size:9.5px;font-weight:400;color:#000;letter-spacing:0.000px;">30</div>
<div class="t" style="left:720.7px;top:524.2px;font-size:9.5px;font-weight:400;color:#000;letter-spacing:-0.206px;">RingType</div>
<div style="position:absolute;left:765.0px;top:515.5px;width:36.6px;height:16.7px;box-sizing:border-box;background:#fff;border:1px solid #a6a6a6"></div>
<div style="position:absolute;left:788.5px;top:517.5px;width:11.5px;height:12.7px;box-sizing:border-box;background:#e9e9e9;border:1px solid #c9c9c9;border-left-color:#bdbdbd"></div>
<div style="position:absolute;left:789.5px;top:523.4px;width:9.5px;height:1.0px;box-sizing:border-box;background:#bababa"></div>
<svg style="position:absolute;left:788.5px;top:517.5px" width="11.5" height="12.7"><path d="M3.35 4.78 L8.15 4.78 L5.75 1.88 Z" fill="#000"/><path d="M3.35 7.93 L8.15 7.93 L5.75 10.83 Z" fill="#000"/></svg>
<div class="t" style="left:767.0px;top:523.1px;font-size:9.5px;font-weight:400;color:#000;letter-spacing:0.000px;">1</div>
<div style="position:absolute;left:494.6px;top:532.0px;width:32.1px;height:16.3px;box-sizing:border-box;background:#bfbfbf;border:1.5px solid #c6c6c6;border-right-color:#bfbfbf;border-bottom-width:1px"></div>
<div style="position:absolute;left:496.1px;top:533.8px;width:13.6px;height:13.7px;box-sizing:border-box;background:#fff"></div>
<div style="position:absolute;left:502.0px;top:535.8px;width:2.0px;height:9.4px;box-sizing:border-box;background:#b8b8b8;border-radius:1px"></div>
<div style="position:absolute;left:531.7px;top:532.6px;width:33.5px;height:18.3px;box-sizing:border-box;background:#fff;border:1px solid #5a5a5a"></div>
<div class="t" style="left:448.5px;width:200px;text-align:center;top:541.2px;font-size:9.5px;font-weight:400;color:#000;letter-spacing:-0.213px;text-indent:-0.213px;">MO</div>
<div style="position:absolute;left:564.2px;top:532.6px;width:33.7px;height:18.3px;box-sizing:border-box;background:#fff;border:1px solid #5a5a5a"></div>
<div class="t" style="left:481.0px;width:200px;text-align:center;top:541.2px;font-size:9.5px;font-weight:400;color:#000;letter-spacing:-0.250px;text-indent:-0.250px;transform-origin:50% 0;transform:scaleX(0.8865);">TUS</div>
<div style="position:absolute;left:596.9px;top:532.6px;width:33.5px;height:18.3px;box-sizing:border-box;background:#fff;border:1px solid #5a5a5a"></div>
<div class="t" style="left:513.6px;width:200px;text-align:center;top:541.2px;font-size:9.5px;font-weight:400;color:#000;letter-spacing:-0.250px;text-indent:-0.250px;transform-origin:50% 0;transform:scaleX(0.9044);">WED</div>
<div style="position:absolute;left:629.4px;top:532.6px;width:33.8px;height:18.3px;box-sizing:border-box;background:#fff;border:1px solid #5a5a5a"></div>
<div class="t" style="left:546.3px;width:200px;text-align:center;top:541.2px;font-size:9.5px;font-weight:400;color:#000;letter-spacing:-0.250px;text-indent:-0.250px;transform-origin:50% 0;transform:scaleX(0.9353);">THU</div>
<div style="position:absolute;left:662.2px;top:532.6px;width:33.9px;height:18.3px;box-sizing:border-box;background:#fff;border:1px solid #5a5a5a"></div>
<div class="t" style="left:579.2px;width:200px;text-align:center;top:541.2px;font-size:9.5px;font-weight:400;color:#000;letter-spacing:-0.250px;text-indent:-0.250px;transform-origin:50% 0;transform:scaleX(0.8709);">FRI</div>
<div style="position:absolute;left:695.1px;top:532.6px;width:33.7px;height:18.3px;box-sizing:border-box;background:#fff;border:1px solid #5a5a5a"></div>
<div class="t" style="left:612.0px;width:200px;text-align:center;top:541.2px;font-size:9.5px;font-weight:400;color:#000;letter-spacing:-0.250px;text-indent:-0.250px;transform-origin:50% 0;transform:scaleX(0.9259);">SAT</div>
<div style="position:absolute;left:727.8px;top:532.6px;width:33.2px;height:18.3px;box-sizing:border-box;background:#fff;border:1px solid #5a5a5a"></div>
<div class="t" style="left:644.4px;width:200px;text-align:center;top:541.2px;font-size:9.5px;font-weight:400;color:#000;letter-spacing:-0.250px;text-indent:-0.250px;transform-origin:50% 0;transform:scaleX(0.9304);">SUN</div>
<div style="position:absolute;left:491.4px;top:555.6px;width:366.8px;height:38.4px;box-sizing:border-box;border:1.4px solid #45cdfa;border-radius:2.5px"></div>
<div class="t" style="left:492.8px;top:566.1px;font-size:9.5px;font-weight:400;color:#000;letter-spacing:-0.034px;">AlarmClock No.4</div>
<div style="position:absolute;left:569.2px;top:557.4px;width:48.6px;height:16.7px;box-sizing:border-box;background:#fff;border:1px solid #a6a6a6"></div>
<div style="position:absolute;left:603.3px;top:559.4px;width:12.5px;height:12.7px;box-sizing:border-box;background:#e9e9e9;border:1px solid #c9c9c9;border-left-color:#bdbdbd"></div>
<div style="position:absolute;left:604.3px;top:565.2px;width:10.5px;height:1.0px;box-sizing:border-box;background:#bababa"></div>
<svg style="position:absolute;left:603.3px;top:559.4px" width="12.5" height="12.7"><path d="M3.85 4.78 L8.65 4.78 L6.25 1.88 Z" fill="#000"/><path d="M3.85 7.93 L8.65 7.93 L6.25 10.83 Z" fill="#000"/></svg>
<div class="t" style="left:571.1px;top:567.2px;font-size:9.5px;font-weight:400;color:#000;letter-spacing:0.000px;">00:00</div>
<div class="t" style="left:630.6px;top:566.1px;font-size:9.5px;font-weight:400;color:#000;letter-spacing:0.115px;">RingTime</div>
<div style="position:absolute;left:676.2px;top:557.4px;width:36.5px;height:16.7px;box-sizing:border-box;background:#fff;border:1px solid #a6a6a6"></div>
<div style="position:absolute;left:699.5px;top:559.4px;width:11.5px;height:12.7px;box-sizing:border-box;background:#e9e9e9;border:1px solid #c9c9c9;border-left-color:#bdbdbd"></div>
<div style="position:absolute;left:700.5px;top:565.2px;width:9.5px;height:1.0px;box-sizing:border-box;background:#bababa"></div>
<svg style="position:absolute;left:699.5px;top:559.4px" width="11.5" height="12.7"><path d="M3.35 4.78 L8.15 4.78 L5.75 1.88 Z" fill="#000"/><path d="M3.35 7.93 L8.15 7.93 L5.75 10.83 Z" fill="#000"/></svg>
<div class="t" style="left:677.8px;top:565.0px;font-size:9.5px;font-weight:400;color:#000;letter-spacing:0.000px;">30</div>
<div class="t" style="left:720.7px;top:566.1px;font-size:9.5px;font-weight:400;color:#000;letter-spacing:-0.206px;">RingType</div>
<div style="position:absolute;left:765.0px;top:557.4px;width:36.6px;height:16.7px;box-sizing:border-box;background:#fff;border:1px solid #a6a6a6"></div>
<div style="position:absolute;left:788.5px;top:559.4px;width:11.5px;height:12.7px;box-sizing:border-box;background:#e9e9e9;border:1px solid #c9c9c9;border-left-color:#bdbdbd"></div>
<div style="position:absolute;left:789.5px;top:565.2px;width:9.5px;height:1.0px;box-sizing:border-box;background:#bababa"></div>
<svg style="position:absolute;left:788.5px;top:559.4px" width="11.5" height="12.7"><path d="M3.35 4.78 L8.15 4.78 L5.75 1.88 Z" fill="#000"/><path d="M3.35 7.93 L8.15 7.93 L5.75 10.83 Z" fill="#000"/></svg>
<div class="t" style="left:767.0px;top:565.0px;font-size:9.5px;font-weight:400;color:#000;letter-spacing:0.000px;">1</div>
<div style="position:absolute;left:494.6px;top:573.9px;width:32.1px;height:16.3px;box-sizing:border-box;background:#bfbfbf;border:1.5px solid #c6c6c6;border-right-color:#bfbfbf;border-bottom-width:1px"></div>
<div style="position:absolute;left:496.1px;top:575.7px;width:13.6px;height:13.7px;box-sizing:border-box;background:#fff"></div>
<div style="position:absolute;left:502.0px;top:577.7px;width:2.0px;height:9.4px;box-sizing:border-box;background:#b8b8b8;border-radius:1px"></div>
<div style="position:absolute;left:531.7px;top:574.5px;width:33.5px;height:18.3px;box-sizing:border-box;background:#fff;border:1px solid #5a5a5a"></div>
<div class="t" style="left:448.5px;width:200px;text-align:center;top:583.1px;font-size:9.5px;font-weight:400;color:#000;letter-spacing:-0.213px;text-indent:-0.213px;">MO</div>
<div style="position:absolute;left:564.2px;top:574.5px;width:33.7px;height:18.3px;box-sizing:border-box;background:#fff;border:1px solid #5a5a5a"></div>
<div class="t" style="left:481.0px;width:200px;text-align:center;top:583.1px;font-size:9.5px;font-weight:400;color:#000;letter-spacing:-0.250px;text-indent:-0.250px;transform-origin:50% 0;transform:scaleX(0.8865);">TUS</div>
<div style="position:absolute;left:596.9px;top:574.5px;width:33.5px;height:18.3px;box-sizing:border-box;background:#fff;border:1px solid #5a5a5a"></div>
<div class="t" style="left:513.6px;width:200px;text-align:center;top:583.1px;font-size:9.5px;font-weight:400;color:#000;letter-spacing:-0.250px;text-indent:-0.250px;transform-origin:50% 0;transform:scaleX(0.9044);">WED</div>
<div style="position:absolute;left:629.4px;top:574.5px;width:33.8px;height:18.3px;box-sizing:border-box;background:#fff;border:1px solid #5a5a5a"></div>
<div class="t" style="left:546.3px;width:200px;text-align:center;top:583.1px;font-size:9.5px;font-weight:400;color:#000;letter-spacing:-0.250px;text-indent:-0.250px;transform-origin:50% 0;transform:scaleX(0.9353);">THU</div>
<div style="position:absolute;left:662.2px;top:574.5px;width:33.9px;height:18.3px;box-sizing:border-box;background:#fff;border:1px solid #5a5a5a"></div>
<div class="t" style="left:579.2px;width:200px;text-align:center;top:583.1px;font-size:9.5px;font-weight:400;color:#000;letter-spacing:-0.250px;text-indent:-0.250px;transform-origin:50% 0;transform:scaleX(0.8709);">FRI</div>
<div style="position:absolute;left:695.1px;top:574.5px;width:33.7px;height:18.3px;box-sizing:border-box;background:#fff;border:1px solid #5a5a5a"></div>
<div class="t" style="left:612.0px;width:200px;text-align:center;top:583.1px;font-size:9.5px;font-weight:400;color:#000;letter-spacing:-0.250px;text-indent:-0.250px;transform-origin:50% 0;transform:scaleX(0.9259);">SAT</div>
<div style="position:absolute;left:727.8px;top:574.5px;width:33.2px;height:18.3px;box-sizing:border-box;background:#fff;border:1px solid #5a5a5a"></div>
<div class="t" style="left:644.4px;width:200px;text-align:center;top:583.1px;font-size:9.5px;font-weight:400;color:#000;letter-spacing:-0.250px;text-indent:-0.250px;transform-origin:50% 0;transform:scaleX(0.9304);">SUN</div>
<div style="position:absolute;left:716.0px;top:677.0px;width:142.0px;height:23.5px;box-sizing:border-box;background:#e1e1e1;border:1px solid #b2b2b2"></div>
<div class="t" style="left:687.0px;width:200px;text-align:center;top:688.7px;font-size:9.5px;font-weight:400;color:#000;letter-spacing:-0.250px;text-indent:-0.250px;">Save</div>
<div style="position:absolute;left:2.0px;top:729.0px;width:896.0px;height:2.0px;box-sizing:border-box;background:#f0f0f0"></div>
<div style="position:absolute;left:10.0px;top:732.0px;width:212.0px;height:16.0px;box-sizing:border-box;border-top:1px solid #808080;border-left:1px solid #808080;border-right:1px solid #f8f8f8;border-bottom:1px solid #f6f6f6"></div>
<div style="position:absolute;left:222.5px;top:732.0px;width:203.5px;height:16.0px;box-sizing:border-box;border-top:1px solid #808080;border-left:1px solid #808080;border-right:1px solid #f8f8f8;border-bottom:1px solid #f6f6f6"></div>
<div style="position:absolute;left:427.0px;top:732.0px;width:447.0px;height:16.0px;box-sizing:border-box;border-top:1px solid #808080;border-left:1px solid #808080;border-right:1px solid #f8f8f8;border-bottom:1px solid #f6f6f6"></div>
<svg style="position:absolute;left:875px;top:739px" width="12" height="12"><g fill="#8a8a8a"><rect x="8" y="1" width="1.2" height="1.2"/><rect x="5" y="4" width="1.2" height="1.2"/><rect x="8" y="4" width="1.2" height="1.2"/><rect x="2" y="7" width="1.2" height="1.2"/><rect x="5" y="7" width="1.2" height="1.2"/><rect x="8" y="7" width="1.2" height="1.2"/></g></svg>
</body></html>
